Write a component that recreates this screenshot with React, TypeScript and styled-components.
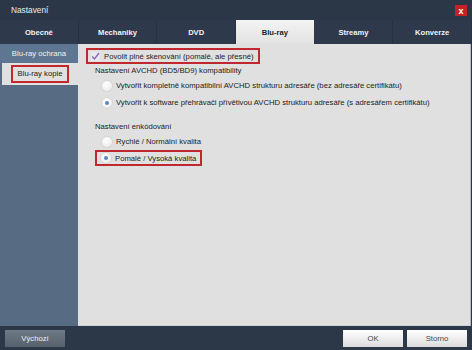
import React from 'react';
import styled, {createGlobalStyle, css} from 'styled-components';

const GlobalStyle = createGlobalStyle`
    html, body {
        margin: 0;
        padding: 0;
        background: #2c3747;
    }
    body {
        font-family: "Liberation Sans", Arial, sans-serif;
        font-size: 7.7px;
        white-space: nowrap;
    }
`;

const TABS = ['Obecné', 'Mechaniky', 'DVD', 'Blu-ray', 'Streamy', 'Konverze'];
const ACTIVE_TAB = 'Blu-ray';

const Window = styled.div`
    width: 472px;
    height: 350px;
    display: flex;
    flex-direction: column;
    background: #2c3747;
    overflow: hidden;
`;

const TitleBar = styled.div`
    height: 20px;
    display: flex;
    align-items: center;
    justify-content: space-between;
    padding: 0 5px 0 11px;
    color: #e8ecf0;
    font-size: 8.3px;
    background: #2b3646;
`;

const CloseButton = styled.div`
    width: 12px;
    height: 11px;
    margin-top: 1px;
    background: #c8202a;
    color: #fff;
    font-weight: bold;
    font-size: 9px;
    line-height: 10px;
    display: flex;
    align-items: center;
    justify-content: center;
`;

const TabBar = styled.div`
    height: 24px;
    display: grid;
    grid-template-columns: repeat(6, 1fr);
    background: #2e3a4b;
`;

const Tab = styled.div<{active?: boolean}>`
    display: flex;
    align-items: center;
    justify-content: center;
    font-weight: bold;
    font-size: 7.6px;
    color: #f0f2f5;
    border-right: 1px solid #273140;
    ${({active}) => active && css`
        color: #1e1e1e;
        background: linear-gradient(#f4f4f4, #e2e2e2);
        border-right: none;
        margin-right: 1px;
    `}
`;

const Body = styled.div`
    flex: 1;
    display: flex;
    padding-right: 1px;
`;

const Sidebar = styled.div`
    width: 78px;
    display: flex;
    flex-direction: column;
    background: #576c82;
`;

const SideItem = styled.div<{selected?: boolean}>`
    height: 19px;
    display: flex;
    align-items: center;
    justify-content: center;
    color: #eef2f6;
    background: #5e7691;
    ${({selected}) => selected && css`
        height: 22px;
        margin-left: 2px;
        color: #1a1a1a;
        background: #e0e0e0;
    `}
`;

const Highlight = styled.span`
    border: 2px solid #c0282e;
    padding: 2px 5px 3px;
`;

const Content = styled.div`
    flex: 1;
    background: #e0e0e0;
    border-right: 1px solid #b3b6b9;
    border-bottom: 1px solid #cdd3d9;
    padding: 4px 8px 0 8px;
    color: #1c1c1c;
    display: flex;
    flex-direction: column;
    align-items: flex-start;
`;

const CheckRow = styled.div`
    display: flex;
    align-items: center;
    gap: 4px;
    height: 12px;
    padding: 0 4px 0 3px;
    border: 2px solid #c0282e;
`;

const CheckBox = styled.span`
    width: 9px;
    height: 9px;
    display: flex;
    align-items: center;
    justify-content: center;
    background: #e9e9ec;
`;

const GroupLabel = styled.div<{top: number}>`
    margin: ${({top}) => top}px 0 0 9px;
    height: 12px;
    line-height: 12px;
`;

const RadioRow = styled.div<{boxed?: boolean}>`
    display: flex;
    align-items: center;
    gap: 4px;
    height: 17px;
    margin-left: 16px;
    ${({boxed}) => boxed && css`
        margin-left: 9px;
        padding: 0 4px 0 4px;
        height: 12px;
        border: 2px solid #c0282e;
    `}
`;

const Radio = styled.span<{checked?: boolean}>`
    width: 10px;
    height: 10px;
    border-radius: 50%;
    background: radial-gradient(circle at 40% 35%, #ffffff, #e6e6e6);
    box-shadow: 0 0 0 1px #d4d4d4;
    display: flex;
    align-items: center;
    justify-content: center;

    &::after {
        content: '';
        width: 4px;
        height: 4px;
        border-radius: 50%;
        background: ${({checked}) => (checked ? '#5f86b8' : 'transparent')};
    }
`;

const Footer = styled.div`
    height: 24px;
    display: flex;
    align-items: center;
    padding: 0 5px;
    gap: 4px;
    background: #2c3747;
`;

const Button = styled.div<{dark?: boolean}>`
    width: 60px;
    height: 17px;
    display: flex;
    align-items: center;
    justify-content: center;
    color: #4a4a4a;
    background: linear-gradient(#ffffff, #dcdcdc);
    ${({dark}) => dark && css`
        color: #eef0f2;
        background: linear-gradient(#6e7a86, #56616d);
    `}
`;

const Spacer = styled.div`
    flex: 1;
`;

export default function App() {
    return (
        <>
            <GlobalStyle/>
            <Window>
                <TitleBar>
                    <span>Nastavení</span>
                    <CloseButton>x</CloseButton>
                </TitleBar>
                <TabBar>
                    {TABS.map((t) => (
                        <Tab
                            key={t}
                            active={t === ACTIVE_TAB}
                        >
                            {t}
                        </Tab>
                    ))}
                </TabBar>
                <Body>
                    <Sidebar>
                        <SideItem>Blu-ray ochrana</SideItem>
                        <SideItem selected={true}>
                            <Highlight>Blu-ray kopie</Highlight>
                        </SideItem>
                    </Sidebar>
                    <Content>
                        <CheckRow>
                            <CheckBox>
                                <svg
                                    width='9'
                                    height='9'
                                    viewBox='0 0 9 9'
                                >
                                    <path
                                        d='M1.2 4.6 L3.5 7 L8 1'
                                        fill='none'
                                        stroke='#8467c2'
                                        strokeWidth='1.4'
                                    />
                                </svg>
                            </CheckBox>
                            <span>Povolit plné skenování (pomalé, ale přesné)</span>
                        </CheckRow>
                        <GroupLabel top={1}>Nastavení AVCHD (BD5/BD9) kompatibility</GroupLabel>
                        <RadioRow>
                            <Radio/>
                            <span>Vytvořit kompletně kompatibilní AVCHD strukturu adresáře (bez adresáře certifikátu)</span>
                        </RadioRow>
                        <RadioRow>
                            <Radio checked={true}/>
                            <span>Vytvořit k software přehrávači přívětivou AVCHD strukturu adresáře (s adresářem certifikátu)</span>
                        </RadioRow>
                        <GroupLabel top={10}>Nastavení enkódování</GroupLabel>
                        <RadioRow>
                            <Radio/>
                            <span>Rychlé / Normální kvalita</span>
                        </RadioRow>
                        <RadioRow boxed={true}>
                            <Radio checked={true}/>
                            <span>Pomalé / Vysoká kvalita</span>
                        </RadioRow>
                    </Content>
                </Body>
                <Footer>
                    <Button dark={true}>Výchozí</Button>
                    <Spacer/>
                    <Button>OK</Button>
                    <Button>Storno</Button>
                </Footer>
            </Window>
        </>
    );
}
